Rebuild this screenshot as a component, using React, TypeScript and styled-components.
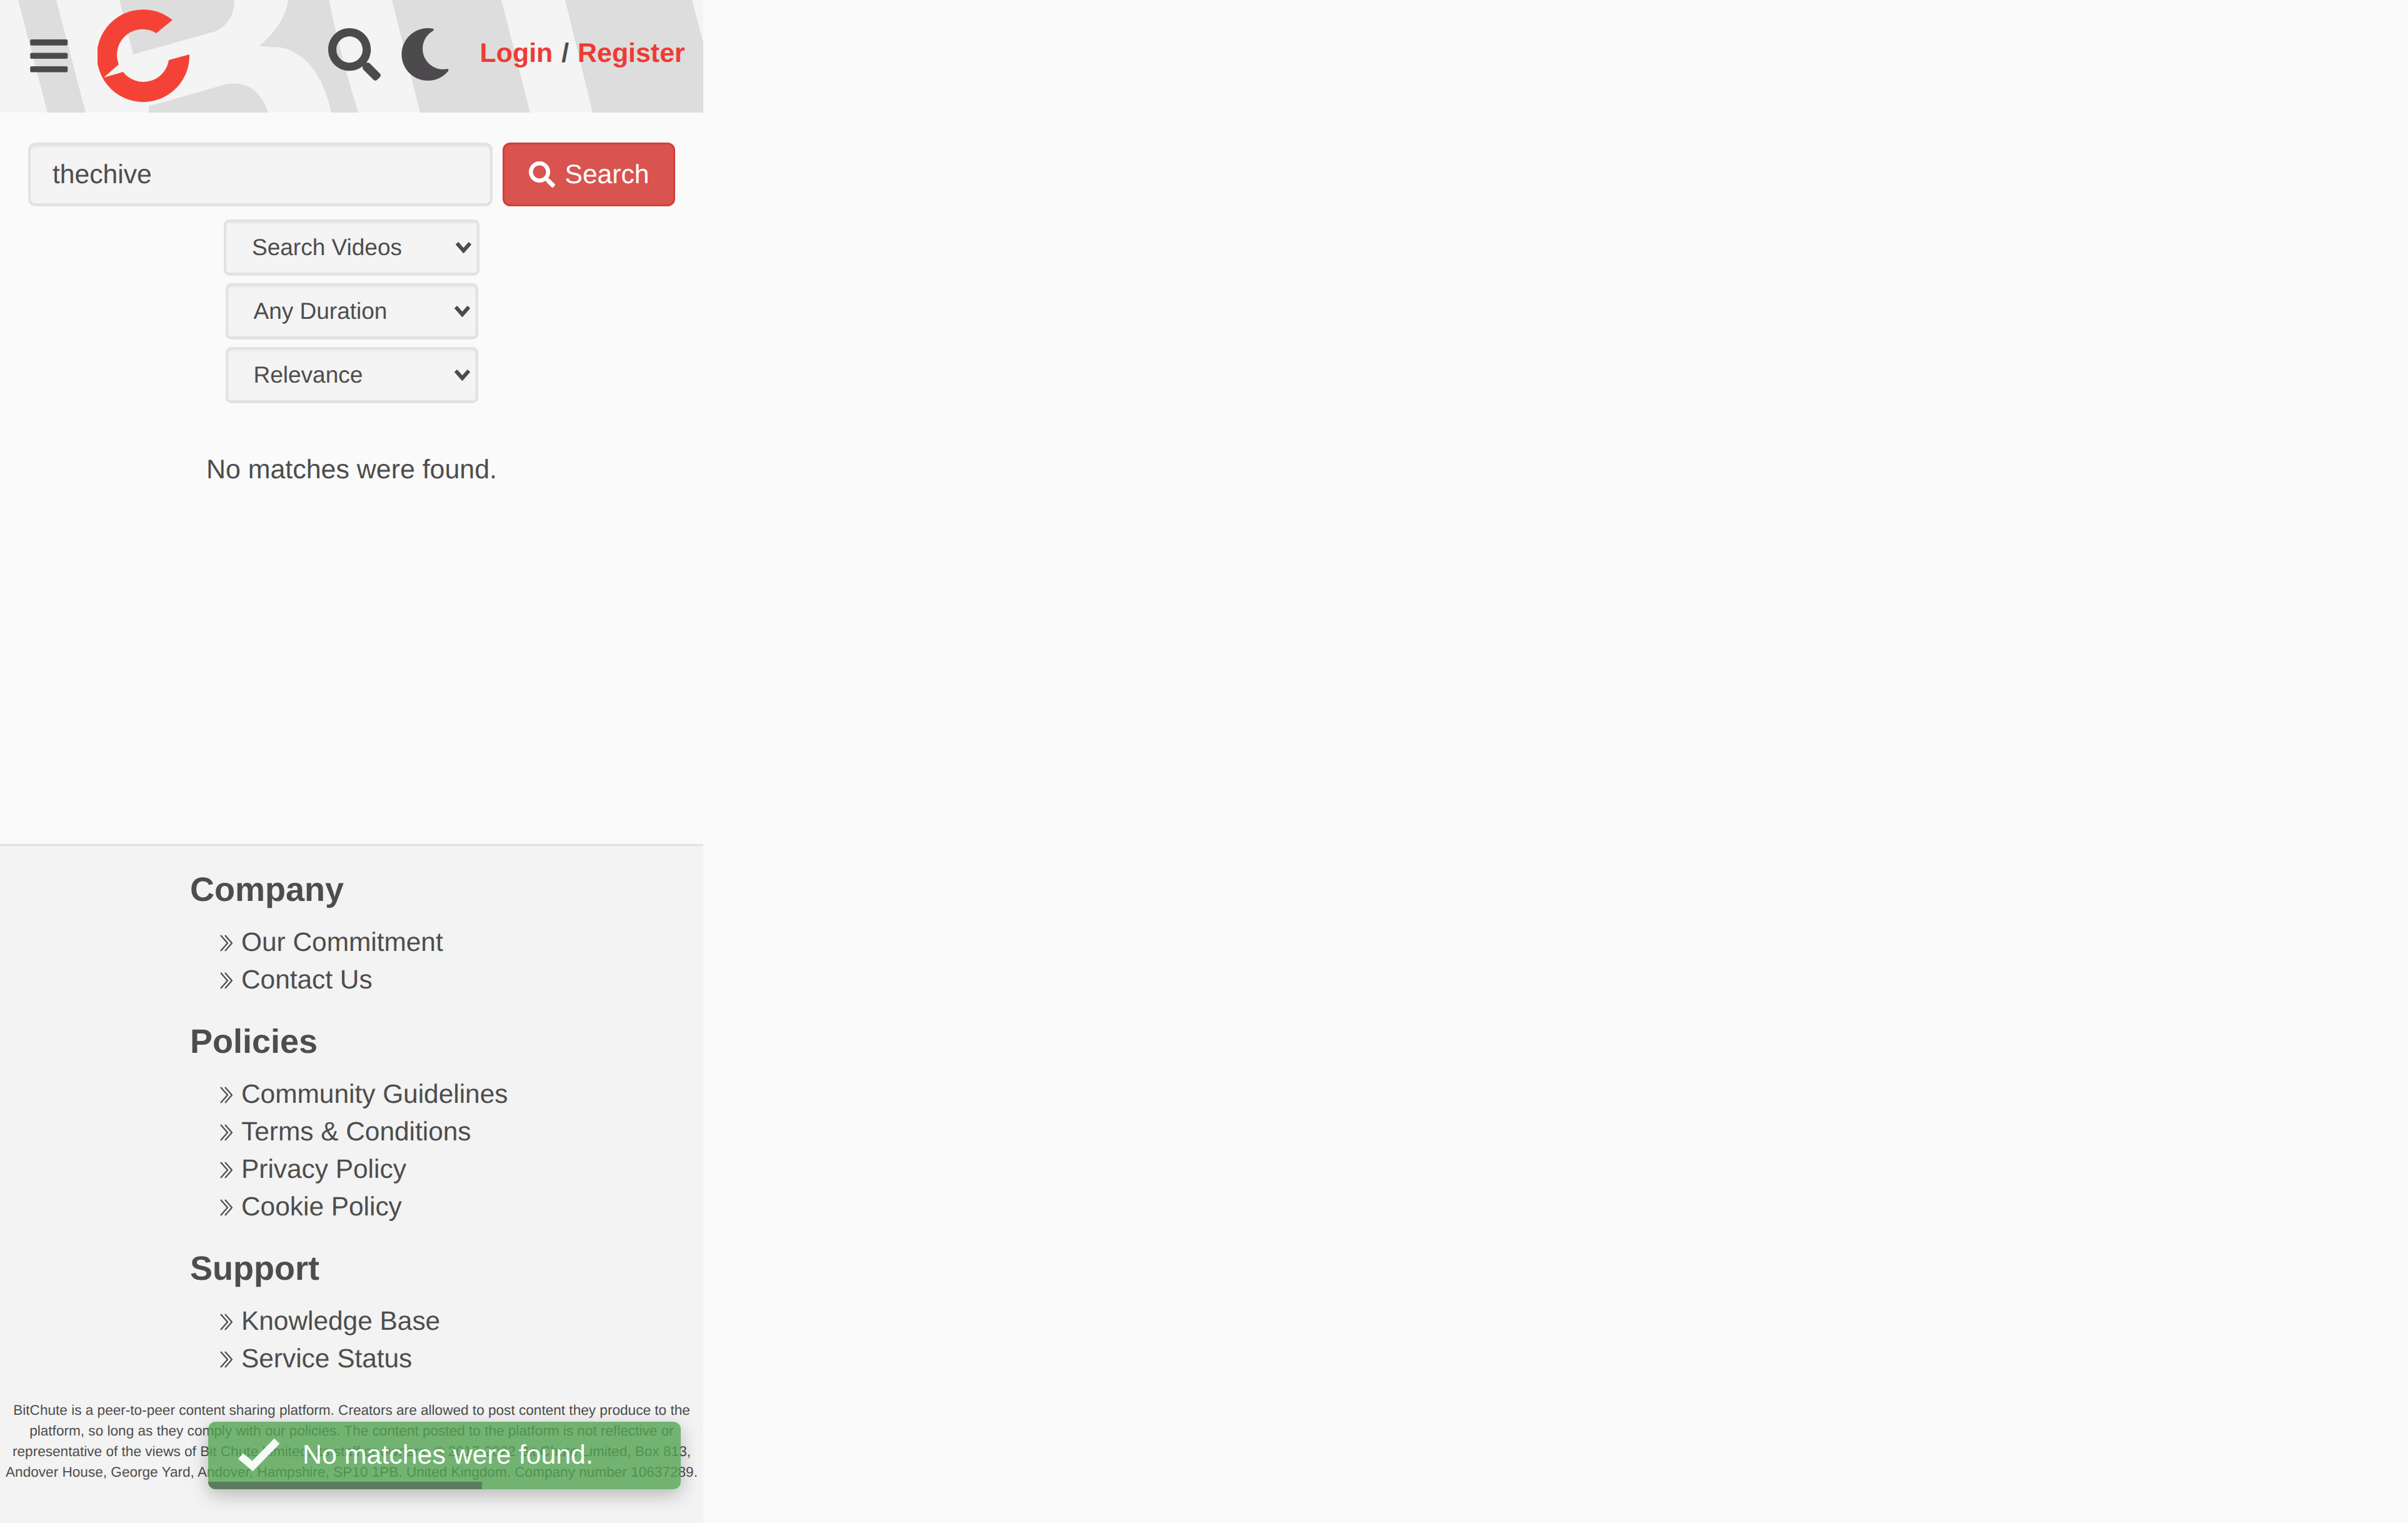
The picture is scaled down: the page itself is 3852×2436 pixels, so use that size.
import styled, { createGlobalStyle } from "styled-components";
import { FaBars, FaMoon, FaSearch } from "react-icons/fa";

const policies = ["Community Guidelines", "Terms & Conditions", "Privacy Policy", "Cookie Policy"];

const sections = [
  { title: "Company", links: ["Our Commitment", "Contact Us"] },
  { title: "Policies", links: policies },
  { title: "Support", links: ["Knowledge Base", "Service Status"] },
];

const filters = [
  { label: "Search Videos", width: 409 },
  { label: "Any Duration", width: 404 },
  { label: "Relevance", width: 404 },
];

const Logo = () => (
  <LogoSvg viewBox="156 15 147 149">
    <path
      fill="#f44336"
      d="M276 32 A74 74 0 1 0 303 87 L270 96 A41 41 0 0 1 197 115 L166 124 L190 103 L189 100 A41 41 0 0 1 250 53 Z"
    />
  </LogoSvg>
);

// the big faded letter behind the header
const Watermark = () => (
  <WatermarkSvg viewBox="0 0 1125 180">
    <path fill="#dddddd" d="M29 0 L90 0 L137 180 L76 180 Z" />
    <path fill="#dddddd" d="M191 0 L213 87 L345 50 Q375 35 375 0 Z" />
    <path fill="#dddddd" d="M238 170 L360 135 Q410 125 429 180 L238 180 Z" />
    <path fill="#dddddd" d="M461 0 L526 0 Q545 90 573 180 L530 180 Q510 90 450 76 L414 74 Q455 40 461 0 Z" />
    <path fill="#dddddd" d="M627 0 L802 0 L848 180 L672 180 Z" />
    <path fill="#dddddd" d="M904 0 L1107 0 L1125 68 L1125 180 L948 180 Z" />
  </WatermarkSvg>
);

const DoubleChevron = () => (
  <ChevronSvg viewBox="0 0 20 27">
    <path d="M1 1 L12 13.5 L1 26" />
    <path d="M8 1 L19 13.5 L8 26" />
  </ChevronSvg>
);

const App = () => {
  return (
    <Page>
      <GlobalStyle />
      <Header>
        <Watermark />
        <MenuIcon size={68.6} />
        <Logo />
        <SearchIcon size={84} />
        <MoonIcon size={84} />
        <AuthLinks>
          <AuthLink>Login</AuthLink> / <AuthLink>Register</AuthLink>
        </AuthLinks>
      </Header>
      <Main>
        <SearchRow>
          <SearchInput defaultValue="thechive" />
          <SearchButton>
            <FaSearch size={42} />
            Search
          </SearchButton>
        </SearchRow>
        <Filters>
          {filters.map((filter) => (
            <SelectWrap key={filter.label} $width={filter.width}>
              <Select defaultValue={filter.label}>
                <option>{filter.label}</option>
              </Select>
              <SelectArrow viewBox="0 0 27 19">
                <path d="M3 3 L13.5 15 L24 3" />
              </SelectArrow>
            </SelectWrap>
          ))}
        </Filters>
        <NoMatches>No matches were found.</NoMatches>
      </Main>
      <Footer>
        <Sections>
          {sections.map((section) => (
            <section key={section.title}>
              <SectionTitle>{section.title}</SectionTitle>
              <LinkList>
                {section.links.map((link) => (
                  <LinkRow key={link}>
                    <DoubleChevron />
                    {link}
                  </LinkRow>
                ))}
              </LinkList>
            </section>
          ))}
        </Sections>
        <Disclaimer>
          BitChute is a peer-to-peer content sharing platform. Creators are allowed to post content they produce to the
          platform, so long as they comply with our policies. The content posted to the platform is not reflective or
          representative of the views of Bit Chute Limited, its staff or owners. © 2017-2022 Bit Chute Limited, Box 813,
          Andover House, George Yard, Andover, Hampshire, SP10 1PB. United Kingdom. Company number 10637289.
        </Disclaimer>
      </Footer>
      <Toast>
        <CheckSvg viewBox="0 0 72 55">
          <polyline points="7,31 26,47 65,7" />
        </CheckSvg>
        <ToastText>No matches were found.</ToastText>
        <ToastProgress />
      </Toast>
    </Page>
  );
};

const GlobalStyle = createGlobalStyle`
  html, body {
    margin: 0;
    padding: 0;
    background-color: #fafafa;
  }
  * {
    box-sizing: border-box;
  }
`;

const Page = styled.div`
  position: relative;
  width: 1125px;
  height: 2436px;
  display: flex;
  flex-direction: column;
  overflow: hidden;
  font-family: "Liberation Sans", Arial, sans-serif;
  text-rendering: geometricPrecision;
  color: #4d4d4d;
`;

const Header = styled.header`
  position: relative;
  height: 180px;
  flex-shrink: 0;
  display: flex;
  align-items: center;
  padding: 0 0 2px 44px;
  background-color: #f4f4f4;
`;

const WatermarkSvg = styled.svg`
  position: absolute;
  left: 0;
  top: 0;
  width: 1125px;
  height: 180px;
`;

const MenuIcon = styled(FaBars)`
  position: relative;
  color: #4c4a4d;
`;

const LogoSvg = styled.svg`
  position: relative;
  width: 147px;
  height: 149px;
  margin-left: 43px;
`;

const SearchIcon = styled(FaSearch)`
  position: relative;
  margin: 0 0 4px 222px;
  color: #4c4a4d;
`;

const MoonIcon = styled(FaMoon)`
  position: relative;
  margin: 0 0 4px 29px;
  color: #4c4a4d;
`;

const AuthLinks = styled.div`
  position: relative;
  margin: 0 0 8px 46px;
  font-size: 42.9px;
  font-weight: 700;
  word-spacing: 2px;
  white-space: nowrap;
`;

const AuthLink = styled.a`
  color: #ee3b33;
`;

const Main = styled.main`
  height: 1170px;
  flex-shrink: 0;
  padding-top: 48px;
`;

const SearchRow = styled.div`
  display: flex;
  gap: 16px;
  padding-left: 45px;
`;

const SearchInput = styled.input`
  width: 743px;
  height: 102px;
  padding: 0 35px;
  border: solid #e2e2e2;
  border-width: 5px 4px 5px;
  border-radius: 12px;
  background-color: #f4f4f4;
  box-shadow: inset 0 3px 3px rgba(0, 0, 0, 0.04);
  font-family: inherit;
  font-size: 42.6px;
  text-rendering: geometricPrecision;
  color: #4d4d4d;
  outline: none;
`;

const SearchButton = styled.button`
  width: 276px;
  height: 102px;
  display: flex;
  align-items: center;
  justify-content: center;
  gap: 16px;
  padding: 0;
  border: 3px solid #d43f3a;
  border-radius: 12px;
  background-color: #d9534f;
  font-family: inherit;
  font-size: 42.6px;
  text-rendering: geometricPrecision;
  color: #ffffff;
`;

const Filters = styled.div`
  display: flex;
  flex-direction: column;
  align-items: center;
  gap: 12px;
  margin-top: 21px;
`;

const SelectWrap = styled.div<{ $width: number }>`
  position: relative;
  width: ${(props) => props.$width}px;
  height: 90px;
`;

const Select = styled.select`
  width: 100%;
  height: 100%;
  padding: 0 0 0 41px;
  appearance: none;
  border: 4px solid #e2e2e2;
  border-bottom-width: 5px;
  border-radius: 9px;
  background-color: #f4f4f4;
  box-shadow: inset 0 3px 3px rgba(0, 0, 0, 0.04);
  font-family: inherit;
  font-size: 37px;
  text-rendering: geometricPrecision;
  color: #4d4d4d;
  outline: none;
`;

const SelectArrow = styled.svg`
  position: absolute;
  right: 12px;
  top: 35px;
  width: 27px;
  height: 19px;
  fill: none;
  stroke: #4c4a4d;
  stroke-width: 6;
`;

const NoMatches = styled.p`
  margin: 84px 0 0;
  text-align: center;
  font-size: 42.9px;
  line-height: 44px;
`;

const Footer = styled.footer`
  flex: 1;
  border-top: 3px solid #e0e0e0;
  background-color: #f3f3f3;
`;

const Sections = styled.div`
  display: flex;
  flex-direction: column;
  gap: 39px;
  padding: 40px 0 0 304px;
`;

const SectionTitle = styled.h3`
  margin: 0;
  font-size: 54px;
  line-height: 60px;
  font-weight: 700;
`;

const LinkList = styled.ul`
  list-style: none;
  margin: 24px 0 0;
  padding: 0 0 0 48px;
`;

const LinkRow = styled.li`
  display: flex;
  align-items: center;
  gap: 14px;
  height: 60px;
  font-size: 42.4px;
`;

const ChevronSvg = styled.svg`
  width: 20px;
  height: 27px;
  flex-shrink: 0;
  margin-top: 2px;
  fill: none;
  stroke: #4c4a4d;
  stroke-width: 2.2;
`;

const Disclaimer = styled.p`
  margin: 36px 0 0;
  padding: 0 2px;
  text-align: center;
  font-size: 22.6px;
  line-height: 33px;
`;

const Toast = styled.div`
  position: absolute;
  left: 333px;
  bottom: 54px;
  width: 756px;
  height: 108px;
  display: flex;
  align-items: center;
  gap: 34px;
  padding: 0 0 6px 45px;
  overflow: hidden;
  border-radius: 12px;
  background-color: rgba(81, 163, 81, 0.8);
  box-shadow: 0 9px 30px rgba(0, 0, 0, 0.25);
  font-size: 42.9px;
  color: #ffffff;
`;

const CheckSvg = styled.svg`
  width: 72px;
  height: 55px;
  fill: none;
  stroke: #ffffff;
  stroke-width: 12;
  opacity: 0.95;
`;

const ToastText = styled.span`
  margin-top: 5px;
`;

const ToastProgress = styled.div`
  position: absolute;
  left: 0;
  bottom: 0;
  width: 438px;
  height: 12px;
  background-color: #5c7b5e;
`;

export default App;
